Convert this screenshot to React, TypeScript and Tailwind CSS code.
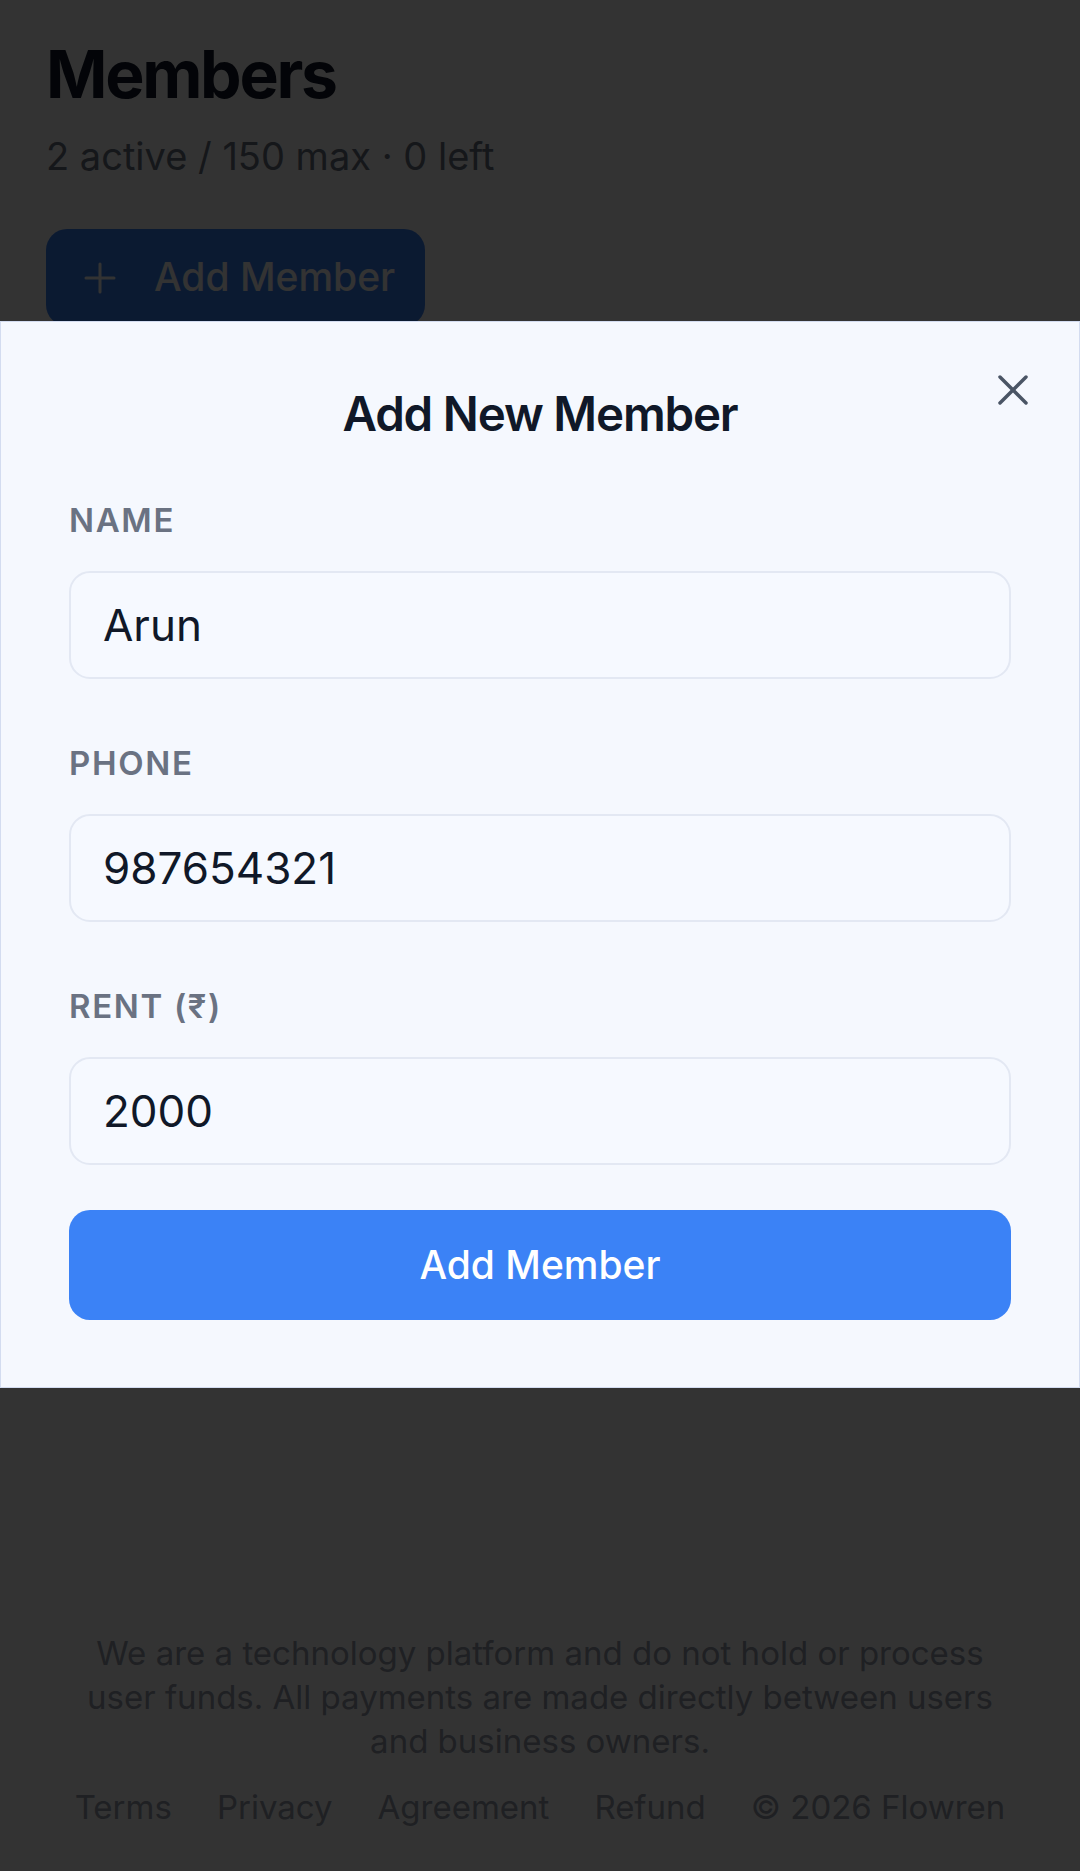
import { Plus, X } from "lucide-react";

const fields = [
  { label: "Name", value: "Arun" },
  { label: "Phone", value: "987654321" },
  { label: "Rent (₹)", value: "2000" },
];

const links = ["Terms", "Privacy", "Agreement", "Refund", "© 2026 Flowren"];

export default function App() {
  return (
    <div className="relative min-h-[1871px] bg-white flex flex-col font-['Inter','Noto_Sans',sans-serif]">
      {/* page behind the dialog */}
      <main className="flex-1 px-[46px] pt-[32px]">
        <h1 className="text-[66px] leading-[84px] font-bold tracking-[-0.035em] text-gray-900">Members</h1>
        <p className="text-[38px] leading-[52px] text-gray-500 mt-[14px]">2 active / 150 max · 0 left</p>
        <button className="mt-[47px] h-[97px] px-[30px] rounded-[21px] bg-[#3b82f6] text-white flex items-center gap-[30px]">
          <Plus size={48} strokeWidth={1.5} />
          <span className="text-[39px] font-medium">Add Member</span>
        </button>
      </main>

      <footer className="px-[70px] pb-[42px] text-gray-400 text-[33px] leading-[44px] text-center">
        <p>We are a technology platform and do not hold or process user funds. All payments are made directly between users and business owners.</p>
        <div className="mt-[22px] flex justify-center gap-[45px]">
          {links.map((l) => (
            <a key={l} href="#">{l}</a>
          ))}
        </div>
      </footer>

      {/* dialog overlay */}
      <div className="fixed inset-0 bg-black/80">
        <div className="absolute left-0 right-0 top-[321px] bg-[#f5f8fe] border border-[#d3dcf0] px-[68px] pt-[62px] pb-[67px]">
          <button className="absolute right-[40px] top-[42px] text-gray-600">
            <X size={52} strokeWidth={1.6} />
          </button>
          <h2 className="text-center text-[47.5px] leading-[60px] font-semibold tracking-tight text-gray-900">
            Add New Member
          </h2>
          <div className="mt-[55px] flex flex-col gap-[63px]">
            {fields.map((f) => (
              <div key={f.label} className="flex flex-col">
                <label className="text-[33px] leading-[42px] font-semibold uppercase tracking-wider text-gray-500 mb-[30px]">
                  {f.label}
                </label>
                <input
                  defaultValue={f.value}
                  className="h-[108px] rounded-[21px] border-2 border-[#e3e8f3] bg-[#f6f9ff] px-[32px] text-[44px] text-gray-900 outline-none"
                />
              </div>
            ))}
          </div>
          <button className="mt-[45px] w-full h-[110px] rounded-[21px] bg-[#3b82f6] text-white text-[39px] font-medium">
            Add Member
          </button>
        </div>
      </div>
    </div>
  );
}
